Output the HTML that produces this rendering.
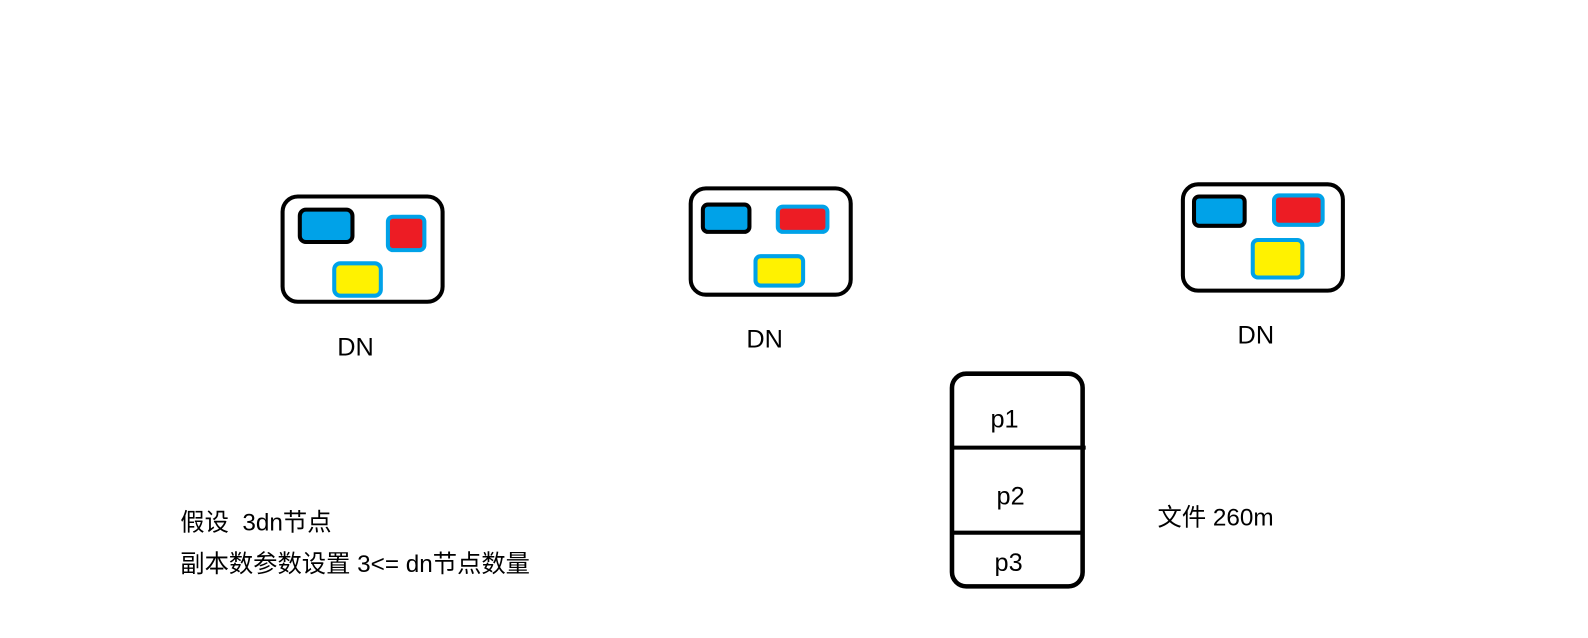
<!DOCTYPE html>
<html><head><meta charset="utf-8"><style>
html,body{margin:0;padding:0;background:#fff;width:1588px;height:638px;overflow:hidden}
svg{position:absolute;left:0;top:0}
text{font-family:"Liberation Sans","Noto Sans CJK SC",sans-serif;fill:#000}
</style></head><body>
<svg width="1588" height="638" viewBox="0 0 1568 630">
<g fill="none" stroke-width="4">
<rect x="279" y="194" width="158" height="104" rx="15" stroke="#000"/>
<rect x="296" y="207" width="52" height="32" rx="6" stroke="#000" fill="#00a2e8"/>
<rect x="383" y="214" width="36" height="33" rx="5" stroke="#00a2e8" fill="#ed1c24"/>
<rect x="330" y="260" width="46" height="32" rx="6" stroke="#00a2e8" fill="#fff200"/>
<rect x="682" y="186" width="158" height="105" rx="15" stroke="#000"/>
<rect x="694" y="202" width="46" height="27" rx="5" stroke="#000" fill="#00a2e8"/>
<rect x="768" y="204" width="49" height="25" rx="5" stroke="#00a2e8" fill="#ed1c24"/>
<rect x="746" y="253" width="47" height="29" rx="5" stroke="#00a2e8" fill="#fff200"/>
<rect x="1168" y="182" width="158" height="105" rx="15" stroke="#000"/>
<rect x="1179" y="194" width="50" height="29" rx="5" stroke="#000" fill="#00a2e8"/>
<rect x="1258" y="193" width="48" height="29" rx="5" stroke="#00a2e8" fill="#ed1c24"/>
<rect x="1237" y="237" width="49" height="37" rx="5" stroke="#00a2e8" fill="#fff200"/>
<rect x="940" y="369" width="129" height="210" rx="14" stroke="#000" stroke-width="4.5"/>
<line x1="940" y1="442" x2="1072" y2="442" stroke="#000" stroke-width="4"/>
<line x1="940" y1="526" x2="1069" y2="526" stroke="#000" stroke-width="4"/>
</g>
<g font-size="25">
<text x="333" y="351">DN</text>
<text x="737" y="343">DN</text>
<text x="1222" y="339">DN</text>
<text x="978" y="422">p1</text>
<text x="984" y="498">p2</text>
<text x="982" y="564">p3</text>
</g>
<g font-size="24">
<text x="1143" y="519">文件 260m</text>
<text x="178" y="524" xml:space="preserve">假设  3dn节点</text>
<text x="178" y="565">副本数参数设置 3&lt;= dn节点数量</text>
</g>
</svg>
</body></html>
